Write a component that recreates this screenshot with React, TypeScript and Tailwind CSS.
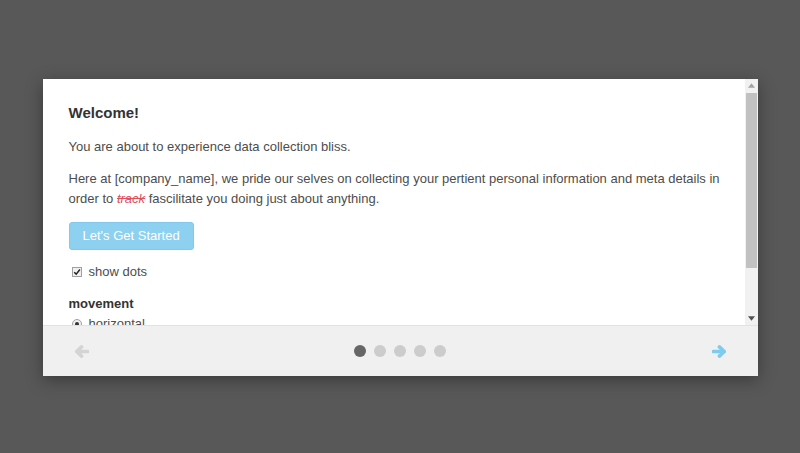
import React from "react";

const dots = [0, 1, 2, 3, 4];

function Arrow({ dir, color }: { dir: "left" | "right"; color: string }) {
  return (
    <svg viewBox="0 0 15 13" className={dir === "left" ? "w-[15px] h-[13px] -scale-x-100" : "w-[15px] h-[13px]"}>
      <path d="M1.5 6.5 H12" stroke={color} strokeWidth="3.6" strokeLinecap="round" fill="none" />
      <path d="M7.4 1.9 L12.2 6.5 L7.4 11.1" stroke={color} strokeWidth="3.6" strokeLinecap="round" strokeLinejoin="round" fill="none" />
    </svg>
  );
}

export default function App() {
  return (
    <div className="w-full h-[453px] bg-[#595858] flex items-center justify-center pt-[2px] font-['Liberation_Sans',Arial,sans-serif]">
      <div className="w-[715px] h-[297px] bg-white flex flex-col shadow-[0_4px_16px_rgba(0,0,0,0.35)]">
        <div className="flex-1 flex min-h-0">
          <div className="flex-1 overflow-hidden pl-[26px] pr-[16px] pt-[24px] text-[13px] leading-[20px] text-[#4d4d4d]">
            <h3 className="text-[15px] font-bold text-[#333] mb-[14px]">Welcome!</h3>
            <p className="mb-[12px]">You are about to experience data collection bliss.</p>
            <p className="mb-[13px]">
              Here at [company_name], we pride our selves on collecting your pertient personal information and meta
              details in order to <s className="italic text-[#e0505a]">track</s> fascilitate you doing just about anything.
            </p>
            <button className="h-[28px] px-[13px] rounded-[3px] bg-[#8ed0ef] border border-[#80c8ec] text-white text-[13px]">
              Let's Get Started
            </button>
            <label className="flex items-center mt-[12px] h-[20px]">
              <span className="ml-[3px] mr-[7px] w-[10px] h-[10px] border border-[#a0a0a0] bg-[#f0f0f0] flex items-center justify-center">
                <svg viewBox="0 0 10 10" className="w-[8px] h-[8px]">
                  <path d="M1.5 5.2 L4 7.6 L8.6 1.8" fill="none" stroke="#222" strokeWidth="1.8" />
                </svg>
              </span>
              show dots
            </label>
            <div className="mt-[12px] font-bold text-[#333]">movement</div>
            <label className="flex items-center h-[20px]">
              <span className="ml-[3px] mr-[7px] w-[10px] h-[10px] rounded-full border border-[#a0a0a0] bg-[#f0f0f0] flex items-center justify-center">
                <span className="w-[4px] h-[4px] rounded-full bg-[#333]" />
              </span>
              horizontal
            </label>
          </div>
          <div className="w-[13px] bg-[#f1f1f1] flex flex-col items-center">
            <svg viewBox="0 0 8 5" className="w-[7px] h-[5px] mt-[4px] mb-[5px]">
              <path d="M4 0 L8 5 L0 5 Z" fill="#a3a3a3" />
            </svg>
            <div className="w-[11px] h-[175px] bg-[#c1c1c1]" />
            <div className="flex-1" />
            <svg viewBox="0 0 8 5" className="w-[7px] h-[5px] mb-[4px]">
              <path d="M0 0 L8 0 L4 5 Z" fill="#505050" />
            </svg>
          </div>
        </div>
        <div className="h-[51px] bg-[#f0f0f0] border-t border-[#e2e2e2] flex items-center justify-between px-[31px]">
          <button className="flex">
            <Arrow dir="left" color="#d4d4d4" />
          </button>
          <div className="flex gap-[8px]">
            {dots.map((d) => (
              <span
                key={d}
                className={d === 0 ? "w-[12px] h-[12px] rounded-full bg-[#666]" : "w-[12px] h-[12px] rounded-full bg-[#cccccc]"}
              />
            ))}
          </div>
          <button className="flex">
            <Arrow dir="right" color="#7fcbef" />
          </button>
        </div>
      </div>
    </div>
  );
}
